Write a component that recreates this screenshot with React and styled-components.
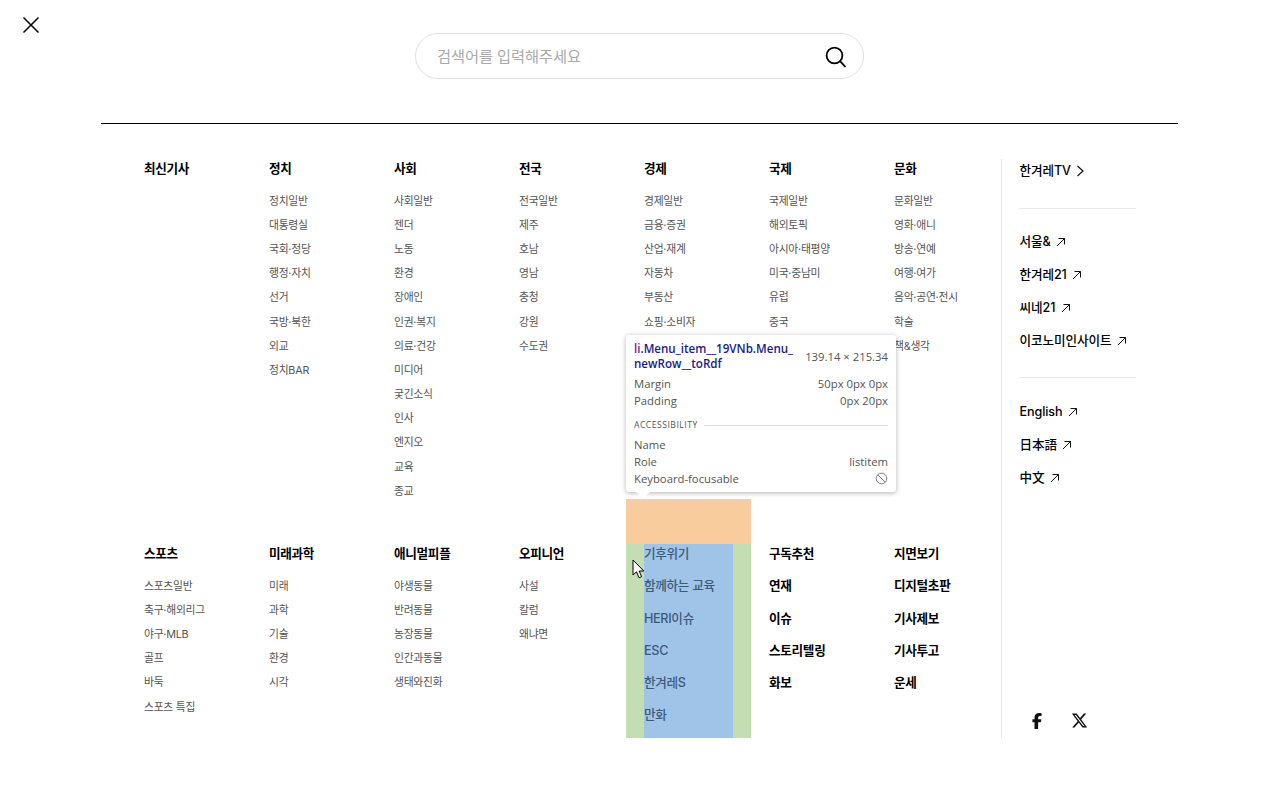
import styled, { createGlobalStyle } from "styled-components";
import { FaFacebookF, FaXTwitter } from "react-icons/fa6";

const GlobalStyle = createGlobalStyle`
  html, body {
    margin: 0;
    background: #fff;
    font-family: Inter, "Noto Sans CJK KR", sans-serif;
    color: #111;
  }
  ul {
    margin: 0;
    padding: 0;
    list-style: none;
  }
`;

const topColumns = [
  { title: "최신기사", links: [] },
  { title: "정치", links: ["정치일반", "대통령실", "국회·정당", "행정·자치", "선거", "국방·북한", "외교", "정치BAR"] },
  { title: "사회", links: ["사회일반", "젠더", "노동", "환경", "장애인", "인권·복지", "의료·건강", "미디어", "궂긴소식", "인사", "엔지오", "교육", "종교"] },
  { title: "전국", links: ["전국일반", "제주", "호남", "영남", "충청", "강원", "수도권"] },
  { title: "경제", links: ["경제일반", "금융·증권", "산업·재계", "자동차", "부동산", "쇼핑·소비자"] },
  { title: "국제", links: ["국제일반", "해외토픽", "아시아·태평양", "미국·중남미", "유럽", "중국"] },
  { title: "문화", links: ["문화일반", "영화·애니", "방송·연예", "여행·여가", "음악·공연·전시", "학술", "책&생각"] },
];

const bottomColumns = [
  { title: "스포츠", links: ["스포츠일반", "축구·해외리그", "야구·MLB", "골프", "바둑", "스포츠 특집"] },
  { title: "미래과학", links: ["미래", "과학", "기술", "환경", "시각"] },
  { title: "애니멀피플", links: ["야생동물", "반려동물", "농장동물", "인간과동물", "생태와진화"] },
  { title: "오피니언", links: ["사설", "칼럼", "왜냐면"] },
];

const inspectedLinks = ["기후위기", "함께하는 교육", "HERI이슈", "ESC", "한겨레S", "만화"];

const boldColumns = [
  ["구독추천", "연재", "이슈", "스토리텔링", "화보"],
  ["지면보기", "디지털초판", "기사제보", "기사투고", "운세"],
];

const Page = styled.div`
  position: relative;
  height: 803px;
  overflow: hidden;
  padding-top: 33px;
  box-sizing: border-box;
`;

const CloseButton = styled.button`
  position: absolute;
  top: 16px;
  left: 22px;
  display: flex;
  width: 18px;
  height: 18px;
  padding: 0;
  border: 0;
  background: none;
`;

const SearchBox = styled.div`
  display: flex;
  align-items: center;
  justify-content: space-between;
  box-sizing: border-box;
  width: 449px;
  height: 46px;
  margin: 0 0 44px 415px;
  padding: 0 17px 0 21px;
  border: 1px solid #e0e0e0;
  border-radius: 23px;
  color: #aaa;
  font-size: 15.3px;
  letter-spacing: -0.1px;

  span {
    padding-bottom: 2px;
  }
`;

const Container = styled.div`
  display: flex;
  box-sizing: border-box;
  width: 1077px;
  margin: 0 0 0 101px;
  padding: 35px 0 0 25px;
  border-top: 1px solid #000;
`;

const MenuGrid = styled.ul`
  display: grid;
  grid-template-columns: repeat(7, 125px);
  grid-template-rows: 340px 239px;
`;

const Item = styled.li`
  padding-top: ${(props) => (props.$lower ? "45px" : "0")};
  background: ${(props) => (props.$inspected ? "#f9cc9d" : "none")};
`;

const ItemPadding = styled.div`
  padding: 0 18px;
  background: ${(props) => (props.$inspected ? "#c4ddb2" : "none")};
`;

const ItemContent = styled.div`
  height: 194px;
  background: ${(props) => (props.$inspected ? "#9fc4e8" : "none")};
`;

const Title = styled.div`
  height: 18px;
  margin-bottom: ${(props) => (props.$bold ? "14.25px" : "15.6px")};
  color: ${(props) => (props.$inspected ? "#3d5a7d" : "#000")};
  font-size: 12.6px;
  font-weight: ${(props) => (props.$inspected ? 500 : 700)};
  letter-spacing: -0.3px;
  line-height: 19.5px;
  white-space: nowrap;
`;

const SubLink = styled.li`
  height: 15px;
  margin-bottom: 9.2px;
  color: #555;
  font-size: 10.8px;
  letter-spacing: -0.25px;
  line-height: 17px;
  white-space: nowrap;
`;

const Aside = styled.aside`
  box-sizing: border-box;
  width: 135px;
  height: 579px;
  padding: 0 0 0 17px;
  border-left: 1px solid #e6e6e6;
  display: flex;
  flex-direction: column;
`;

const AsideGroup = styled.ul`
  display: flex;
  flex-direction: column;
  gap: 15px;
  padding: ${(props) => props.$pad};
  border-bottom: ${(props) => (props.$last ? "0" : "1px solid #e8e8e8")};
`;

const AsideLink = styled.li`
  display: flex;
  align-items: center;
  gap: 5.5px;
  height: 18px;
  padding-left: 0.5px;
  color: #000;
  font-size: 12.6px;
  font-weight: 500;
  letter-spacing: -0.1px;
  line-height: 18px;
  white-space: nowrap;
`;

const Socials = styled.div`
  display: flex;
  align-items: center;
  gap: 26px;
  margin-top: auto;
  padding: 0 0 9px 10px;
  color: #111;
`;

const Tooltip = styled.div`
  position: absolute;
  top: 335px;
  left: 626px;
  box-sizing: border-box;
  width: 270px;
  height: 157px;
  padding: 6px 8px;
  border-radius: 3px;
  background: #fff;
  box-shadow: 0 1px 5px rgba(0, 0, 0, 0.3);
  color: #555;
  font-family: "Open Sans", sans-serif;
  font-size: 11.3px;
  line-height: 17px;

  &::after {
    content: "";
    position: absolute;
    bottom: -6px;
    left: 10px;
    border-top: 6px solid #fff;
    border-right: 7px solid transparent;
    border-left: 7px solid transparent;
  }
`;

const TooltipHead = styled.div`
  display: flex;
  align-items: center;
  justify-content: space-between;
  margin-bottom: 3.5px;
  line-height: 15px;
`;

const Selector = styled.div`
  color: #1a1a8c;
  font-size: 11.6px;
  font-weight: 600;
  white-space: nowrap;

  b {
    color: #881280;
    font-weight: 600;
  }
`;

const TooltipRow = styled.div`
  display: flex;
  align-items: center;
  justify-content: space-between;
`;

const SectionLabel = styled.div`
  display: flex;
  align-items: center;
  gap: 6px;
  margin: 8px 0 2px;
  font-size: 8.6px;
  letter-spacing: 0.5px;

  &::after {
    content: "";
    flex: 1;
    height: 1px;
    background: #ddd;
  }
`;

const Cursor = styled.svg`
  position: absolute;
  top: 559px;
  left: 632px;
`;

const ArrowIcon = () => (
  <svg width="10" height="10" viewBox="0 0 10 10" fill="none" stroke="#111" strokeWidth="1">
    <path d="M1 9L8.5 1.5M2.5 1.5H8.5V7.5" />
  </svg>
);

const ListColumn = ({ title, links, lower }) => (
  <Item $lower={lower}>
    <ItemPadding>
      <ItemContent>
        <Title>{title}</Title>
        <ul>
          {links.map((link) => (
            <SubLink key={link}>{link}</SubLink>
          ))}
        </ul>
      </ItemContent>
    </ItemPadding>
  </Item>
);

const BoldColumn = ({ links, inspected }) => (
  <Item $lower $inspected={inspected}>
    <ItemPadding $inspected={inspected}>
      <ItemContent $inspected={inspected}>
        {links.map((link) => (
          <Title key={link} $bold $inspected={inspected}>
            {link}
          </Title>
        ))}
      </ItemContent>
    </ItemPadding>
  </Item>
);

const App = () => (
  <Page>
    <GlobalStyle />
    <CloseButton aria-label="닫기">
      <svg width="18" height="18" viewBox="0 0 18 18" fill="none" stroke="#000" strokeWidth="1.5">
        <path d="M1.5 1.5L16.5 16.5M16.5 1.5L1.5 16.5" />
      </svg>
    </CloseButton>

    <SearchBox>
      <span>검색어를 입력해주세요</span>
      <svg width="24" height="24" viewBox="0 0 24 24" fill="none" stroke="#000" strokeWidth="1.8">
        <circle cx="12.5" cy="11.5" r="7.9" />
        <path d="M18 17.2L23.5 23" />
      </svg>
    </SearchBox>

    <Container>
      <MenuGrid>
        {topColumns.map((column) => (
          <ListColumn key={column.title} {...column} />
        ))}
        {bottomColumns.map((column) => (
          <ListColumn key={column.title} {...column} lower />
        ))}
        <BoldColumn links={inspectedLinks} inspected />
        {boldColumns.map((links) => (
          <BoldColumn key={links[0]} links={links} />
        ))}
      </MenuGrid>

      <Aside>
        <AsideGroup $pad="3px 0 28px">
          <AsideLink>
            한겨레TV
            <svg width="9" height="12" viewBox="0 0 9 12" fill="none" stroke="#111" strokeWidth="1.2">
              <path d="M1.5 1L7 6L1.5 11" />
            </svg>
          </AsideLink>
        </AsideGroup>
        <AsideGroup $pad="24px 0 27px">
          {["서울&", "한겨레21", "씨네21", "이코노미인사이트"].map((link) => (
            <AsideLink key={link}>
              {link}
              <ArrowIcon />
            </AsideLink>
          ))}
        </AsideGroup>
        <AsideGroup $pad="25.2px 0 0" $last>
          {["English", "日本語", "中文"].map((link) => (
            <AsideLink key={link}>
              {link}
              <ArrowIcon />
            </AsideLink>
          ))}
        </AsideGroup>
        <Socials>
          <FaFacebookF size={16} />
          <FaXTwitter size={17} />
        </Socials>
      </Aside>
    </Container>

    <Tooltip>
      <TooltipHead>
        <Selector>
          <b>li</b>.Menu_item__19VNb.Menu_
          <br />
          newRow__toRdf
        </Selector>
        <span>139.14 × 215.34</span>
      </TooltipHead>
      <TooltipRow>
        <span>Margin</span>
        <span>50px 0px 0px</span>
      </TooltipRow>
      <TooltipRow>
        <span>Padding</span>
        <span>0px 20px</span>
      </TooltipRow>
      <SectionLabel>ACCESSIBILITY</SectionLabel>
      <TooltipRow>
        <span>Name</span>
      </TooltipRow>
      <TooltipRow>
        <span>Role</span>
        <span>listitem</span>
      </TooltipRow>
      <TooltipRow>
        <span>Keyboard-focusable</span>
        <svg width="13" height="13" viewBox="0 0 13 13" fill="none" stroke="#777" strokeWidth="1">
          <circle cx="6.5" cy="6.5" r="5.3" />
          <path d="M2.8 2.8L10.2 10.2" />
        </svg>
      </TooltipRow>
    </Tooltip>

    <Cursor width="13" height="21" viewBox="0 0 13 21" fill="#fff" stroke="#000" strokeWidth="1">
      <path d="M1 1V16L4.5 12.8L7 18.8L9.6 17.7L7.2 12H11.8Z" />
    </Cursor>
  </Page>
);

export default App;
